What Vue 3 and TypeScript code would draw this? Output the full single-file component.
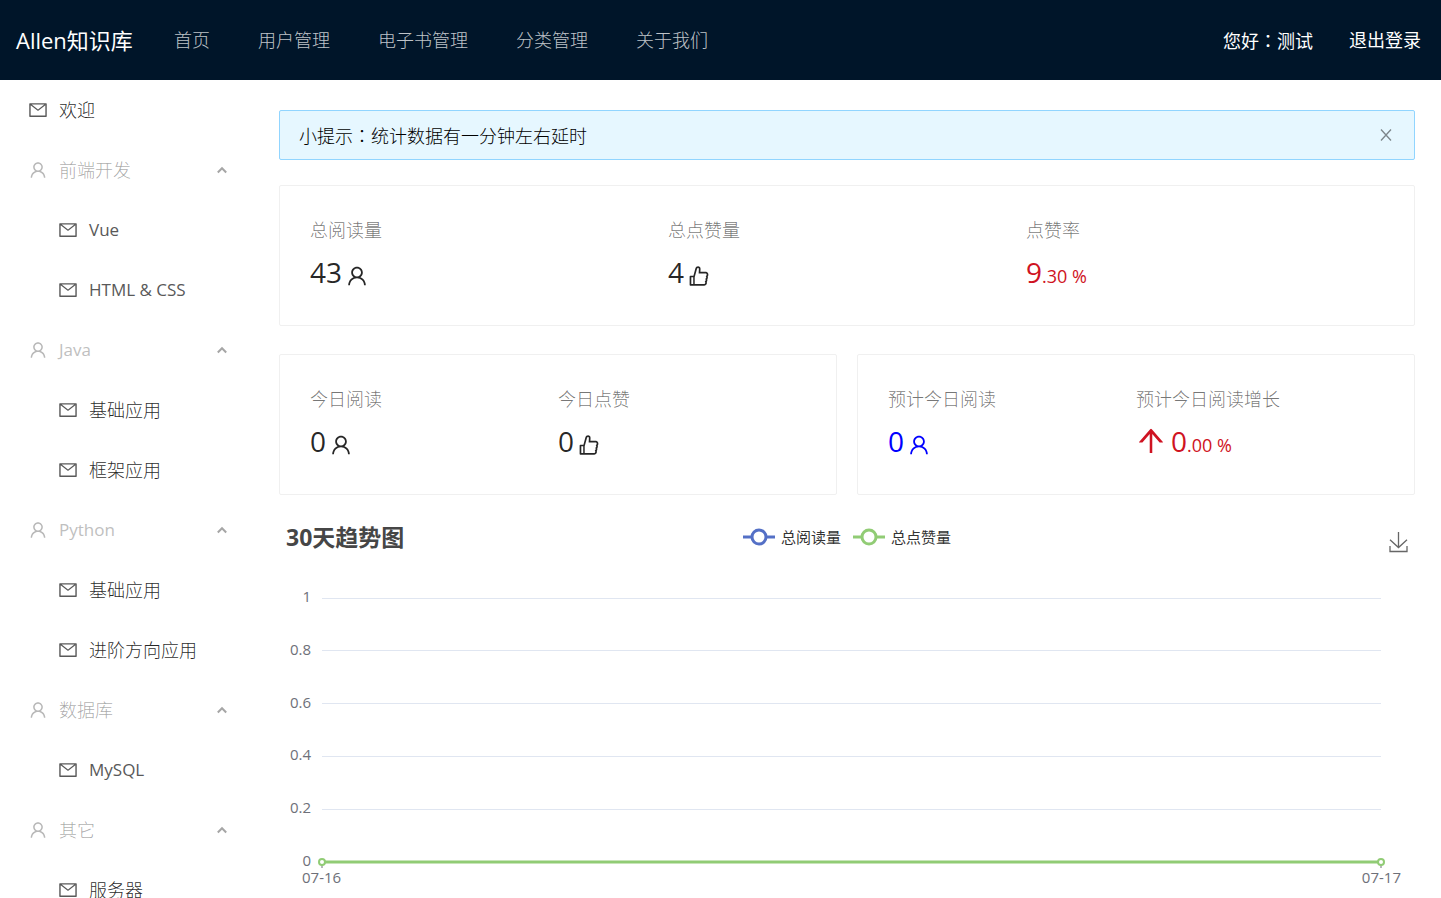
<script setup lang="ts">
import { ref } from 'vue'

interface MenuGroup {
  name: string
  latin?: boolean
  children: { name: string; latin?: boolean }[]
}

const icons = {
  mail: 'M928 160H96c-17.7 0-32 14.3-32 32v640c0 17.7 14.3 32 32 32h832c17.7 0 32-14.3 32-32V192c0-17.7-14.3-32-32-32zm-40 110.8V792H136V270.8l-27.6-21.5 39.3-50.5 42.8 33.3h643.1l42.8-33.3 39.3 50.5-27.7 21.5zM833.6 232L512 482 190.4 232l-42.8-33.3-39.3 50.5 27.6 21.5 341.6 265.6a55.99 55.99 0 0068.7 0L888 270.8l27.6-21.5-39.3-50.5-42.7 33.2z',
  user: 'M858.5 763.6a374 374 0 00-80.6-119.5 375.63 375.63 0 00-119.5-80.6c-.4-.2-.8-.3-1.2-.5C719.5 518 760 444.7 760 362c0-137-111-248-248-248S264 225 264 362c0 82.7 40.5 156 102.8 201.1-.4.2-.8.3-1.2.5-44.8 18.9-85 46-119.5 80.6a375.63 375.63 0 00-80.6 119.5A371.7 371.7 0 00136 901.8a8 8 0 008 8.2h60c4.4 0 7.9-3.5 8-7.8 2-77.2 33-149.5 87.8-204.3 56.7-56.7 132-87.9 212.2-87.9s155.5 31.2 212.2 87.9C779 752.7 810 825 812 902.2c.1 4.4 3.6 7.8 8 7.8h60a8 8 0 008-8.2c-1-47.8-10.9-94.3-29.5-138.2zM512 534c-45.9 0-89.1-17.9-121.6-50.4S340 407.9 340 362c0-45.9 17.9-89.1 50.4-121.6S466.1 190 512 190s89.1 17.9 121.6 50.4S684 316.1 684 362c0 45.9-17.9 89.1-50.4 121.6S557.9 534 512 534z',
  like: 'M885.9 533.7c16.8-22.2 26.1-49.4 26.1-77.7 0-44.9-25.1-87.4-65.5-111.1a67.67 67.67 0 00-34.3-9.3H572.4l6-122.9c1.4-29.7-9.1-57.9-29.5-79.4A106.62 106.62 0 00471 99.9c-52 0-98 35-111.8 85.1l-85.9 311H144c-17.7 0-32 14.3-32 32v364c0 17.7 14.3 32 32 32h601.3c9.2 0 18.2-1.8 26.5-5.4 47.6-20.3 78.3-66.8 78.3-118.4 0-12.6-1.8-25-5.4-37 16.8-22.2 26.1-49.4 26.1-77.7 0-12.6-1.8-25-5.4-37 16.8-22.2 26.1-49.4 26.1-77.7-.2-12.6-2-25.1-5.6-37.1zM184 852V568h81v284h-81zm636.4-353l-21.9 19 13.9 25.4a56.2 56.2 0 016.9 27.3c0 16.5-7.2 32.2-19.6 43l-21.9 19 13.9 25.4a56.2 56.2 0 016.9 27.3c0 16.5-7.2 32.2-19.6 43l-21.9 19 13.9 25.4a56.2 56.2 0 016.9 27.3c0 22.4-13.2 42.6-33.6 51.8H329V564.8l99.5-360.5a44.1 44.1 0 0142.2-32.3c7.6 0 15.1 2.2 21.1 6.7 9.9 7.4 15.2 18.6 14.6 30.5l-9.6 198.4h314.4C829 418.5 840 436.9 840 456c0 16.5-7.2 32.1-19.6 43z',
  up: 'M868 545.5L536.1 163a31.96 31.96 0 00-48.3 0L156 545.5a7.97 7.97 0 006 13.2h81c4.6 0 9-2 12.1-5.5L474 300.9V864c0 4.4 3.6 8 8 8h60c4.4 0 8-3.6 8-8V300.9l218.9 252.3c3 3.5 7.4 5.5 12.1 5.5h81c6.8 0 10.5-8 6-13.2z',
}

const navLinks = ['首页', '用户管理', '电子书管理', '分类管理', '关于我们']

const groups: MenuGroup[] = [
  { name: '前端开发', children: [{ name: 'Vue', latin: true }, { name: 'HTML & CSS', latin: true }] },
  { name: 'Java', latin: true, children: [{ name: '基础应用' }, { name: '框架应用' }] },
  { name: 'Python', latin: true, children: [{ name: '基础应用' }, { name: '进阶方向应用' }] },
  { name: '数据库', children: [{ name: 'MySQL', latin: true }] },
  { name: '其它', children: [{ name: '服务器' }] },
]

const legend = [
  { name: '总阅读量', color: '#5470c6' },
  { name: '总点赞量', color: '#91cc75' },
]

const gridValues = ['1', '0.8', '0.6', '0.4', '0.2']
const dates = ['07-16', '07-17']
const tipVisible = ref(true)
</script>

<template>
  <div class="layout">
    <header class="header">
      <div class="logo">Allen知识库</div>
      <nav class="nav">
        <a v-for="link in navLinks" :key="link" href="#">{{ link }}</a>
      </nav>
      <div class="account">
        <a href="#">您好<span class="colon">：</span>测试</a>
        <a href="#">退出登录</a>
      </div>
    </header>

    <div class="body">
      <aside class="sider">
        <a class="item" href="#">
          <svg class="icon" viewBox="0 0 1024 1024"><path :d="icons.mail" /></svg>
          <span>欢迎</span>
        </a>
        <template v-for="group in groups" :key="group.name">
          <button class="item group" type="button">
            <svg class="icon" viewBox="0 0 1024 1024"><path :d="icons.user" /></svg>
            <span :class="{ latin: group.latin }">{{ group.name }}</span>
            <svg class="chevron" viewBox="0 0 12 8"><path d="M1.800 6.500 6 2.200l4.200 4.300" /></svg>
          </button>
          <a v-for="child in group.children" :key="child.name" class="item child" href="#">
            <svg class="icon" viewBox="0 0 1024 1024"><path :d="icons.mail" /></svg>
            <span :class="{ latin: child.latin }">{{ child.name }}</span>
          </a>
        </template>
      </aside>

      <main class="content">
        <div v-if="tipVisible" class="alert" role="alert">
          <span>小提示<span class="colon">：</span>统计数据有一分钟左右延时</span>
          <button class="close" type="button" aria-label="关闭" @click="tipVisible = false">
            <svg viewBox="0 0 12 12"><path d="M1 .5 11 11.500M11 .5 1 11.500" /></svg>
          </button>
        </div>

        <section class="card">
          <div class="stat">
            <div class="label">总阅读量</div>
            <div class="value">
              <span class="int">43</span>
              <svg class="suffix" viewBox="0 0 1024 1024"><path :d="icons.user" /></svg>
            </div>
          </div>
          <div class="stat">
            <div class="label">总点赞量</div>
            <div class="value">
              <span class="int">4</span>
              <svg class="suffix" viewBox="0 0 1024 1024"><path :d="icons.like" /></svg>
            </div>
          </div>
          <div class="stat">
            <div class="label">点赞率</div>
            <div class="value red">
              <span class="number"><span class="int">9</span><span class="dec">.30 %</span></span>
            </div>
          </div>
        </section>

        <div class="pair">
          <section class="card">
            <div class="stat">
              <div class="label">今日阅读</div>
              <div class="value">
                <span class="int">0</span>
                <svg class="suffix" viewBox="0 0 1024 1024"><path :d="icons.user" /></svg>
              </div>
            </div>
            <div class="stat">
              <div class="label">今日点赞</div>
              <div class="value">
                <span class="int">0</span>
                <svg class="suffix" viewBox="0 0 1024 1024"><path :d="icons.like" /></svg>
              </div>
            </div>
          </section>
          <section class="card">
            <div class="stat">
              <div class="label">预计今日阅读</div>
              <div class="value blue">
                <span class="int">0</span>
                <svg class="suffix" viewBox="0 0 1024 1024"><path :d="icons.user" /></svg>
              </div>
            </div>
            <div class="stat">
              <div class="label">预计今日阅读增长</div>
              <div class="value red">
                <svg class="prefix" viewBox="64 64 896 896"><path :d="icons.up" /></svg>
                <span class="number"><span class="int">0</span><span class="dec">.00 %</span></span>
              </div>
            </div>
          </section>
        </div>

        <section class="chart">
          <div class="chart-head">
            <h2>30天趋势图</h2>
            <div class="legend">
              <button v-for="entry in legend" :key="entry.name" type="button">
                <svg viewBox="0 0 32 18" :stroke="entry.color">
                  <path d="M0 9h32" />
                  <circle cx="16" cy="9" r="7" />
                </svg>
                {{ entry.name }}
              </button>
            </div>
            <button class="download" type="button" aria-label="下载">
              <svg viewBox="0 0 20 22"><path d="M10.500 1v15.500M2 8.800l8.500 7.700L19 8.800M2 15v5.500h17V15" /></svg>
            </button>
          </div>
          <div class="plot">
            <div v-for="value in gridValues" :key="value" class="tick">
              <span>{{ value }}</span>
              <i class="line"></i>
            </div>
            <div class="tick">
              <span>0</span>
              <svg class="series">
                <line class="mark" x1="0" x2="0" y1="8" y2="14" />
                <line class="mark" x1="100%" x2="100%" y1="8" y2="14" />
                <line x1="0" x2="100%" y1="8" y2="8" />
                <circle cx="0" cy="8" r="3" />
                <circle cx="100%" cy="8" r="3" />
              </svg>
            </div>
          </div>
          <div class="dates">
            <span v-for="date in dates" :key="date">{{ date }}</span>
          </div>
        </section>
      </main>
    </div>
  </div>
</template>

<style>
body {
  margin: 0;
  background: #fff;
}
</style>

<style scoped>
.layout {
  height: 100vh;
  overflow: hidden;
  font-family: 'Open Sans', 'Noto Sans CJK SC', sans-serif;
  font-size: 18px;
  font-weight: 300;
  line-height: 28px;
  color: rgba(0, 0, 0, 0.85);
}

a {
  color: inherit;
  text-decoration: none;
}

button {
  border: 0;
  padding: 0;
  background: none;
  font: inherit;
  color: inherit;
  cursor: pointer;
}

svg {
  display: block;
  flex: none;
  fill: currentColor;
}

.colon {
  font-family: 'Noto Sans CJK TC', sans-serif;
}

.header {
  display: flex;
  align-items: center;
  height: 80px;
  padding: 0 20px 0 16px;
  background: #001529;
  color: #fff;
  white-space: nowrap;
}

.logo {
  width: 158px;
  font-size: 22px;
  font-weight: 400;
}

.nav {
  display: flex;
  flex: 1;
  gap: 48px;
  color: rgba(255, 255, 255, 0.75);
}

.account {
  display: flex;
  gap: 36px;
  font-weight: 400;
}

.body {
  display: flex;
}

.sider {
  flex: none;
  width: 249px;
}

.item {
  display: flex;
  align-items: center;
  gap: 11px;
  box-sizing: border-box;
  width: 100%;
  height: 60px;
  padding: 0 21px 0 28px;
  text-align: left;
}

.item span {
  flex: 1;
}

.item .latin {
  font-size: 17px;
  font-weight: 400;
  color: #595959;
}

.child {
  padding-left: 58px;
}

.group {
  color: rgba(0, 0, 0, 0.35);
}

.group .latin {
  color: #bfbfbf;
}

.icon {
  width: 20px;
  height: 20px;
  color: #595959;
}

.group .icon {
  color: #b8b8b8;
}

.chevron {
  width: 12px;
  height: 8px;
  fill: none;
  stroke: #a6a6a6;
  stroke-width: 2;
}

.content {
  flex: 1;
  min-width: 0;
  padding: 30px 26px 0 30px;
}

.alert {
  display: flex;
  align-items: center;
  justify-content: space-between;
  box-sizing: border-box;
  height: 50px;
  margin-bottom: 25px;
  padding: 0 22px 0 19px;
  border: 1px solid #91d5ff;
  border-radius: 2px;
  background: #e6f7ff;
  color: #000;
}

.close svg {
  width: 12px;
  height: 12px;
  fill: none;
  stroke: #7c858a;
  stroke-width: 1.300;
}

.card {
  display: flex;
  flex: 1;
  padding: 30px;
  border: 1px solid #f0f0f0;
  border-radius: 2px;
}

.stat {
  flex: 1;
}

.label {
  margin-bottom: 5px;
  color: rgba(0, 0, 0, 0.55);
}

.value {
  display: flex;
  align-items: center;
  gap: 3px;
  height: 46px;
  font-weight: 400;
}

.number {
  display: flex;
  align-items: baseline;
}

.int {
  font-size: 28px;
}

.dec {
  font-size: 18px;
  line-height: 20px;
}

.suffix {
  width: 24px;
  height: 24px;
  margin-top: 8px;
}

.prefix {
  width: 30px;
  height: 30px;
  margin-right: 2px;
}

.red {
  color: #cf1322;
}

.blue {
  color: #00f;
}

.pair {
  display: flex;
  gap: 20px;
  margin-top: 28px;
}

.chart {
  margin-top: 24px;
  font-weight: 400;
}

.chart-head {
  display: grid;
  grid-template-columns: 1fr auto 1fr;
  align-items: center;
  height: 36px;
  padding: 0 7px;
}

.chart-head h2 {
  margin: 0;
  font-size: 23px;
  font-weight: 700;
  color: #464646;
}

.legend {
  display: flex;
  gap: 12px;
}

.legend button {
  display: flex;
  align-items: center;
  gap: 6px;
  font-size: 15px;
  line-height: 24px;
  color: #333;
}

.legend svg {
  width: 32px;
  height: 18px;
  fill: #fff;
  stroke-width: 3;
}

.download {
  justify-self: end;
  padding-top: 10px;
}

.download svg {
  width: 20px;
  height: 22px;
  fill: none;
  stroke: #666;
  stroke-width: 1.300;
}

.plot {
  display: flex;
  flex-direction: column;
  justify-content: space-between;
  height: 280px;
  margin: 35px 34px 0 0;
}

.tick {
  display: flex;
  align-items: center;
  gap: 11px;
  height: 16px;
  font-size: 15px;
  line-height: 12px;
  color: #6e7079;
}

.tick span {
  align-self: flex-start;
  width: 32px;
  text-align: right;
}

.line {
  flex: 1;
  border-top: 1px solid #e0e6f1;
}

.series {
  flex: 1;
  height: 16px;
  overflow: visible;
  fill: #fff;
  stroke: #91cc75;
  stroke-width: 3;
}

.series circle {
  stroke-width: 2;
}

.series .mark {
  stroke: #6e7079;
  stroke-width: 1;
}

.dates {
  display: flex;
  justify-content: space-between;
  margin: 0 14px 0 23px;
  font-size: 15px;
  line-height: 14px;
  color: #6e7079;
}
</style>
